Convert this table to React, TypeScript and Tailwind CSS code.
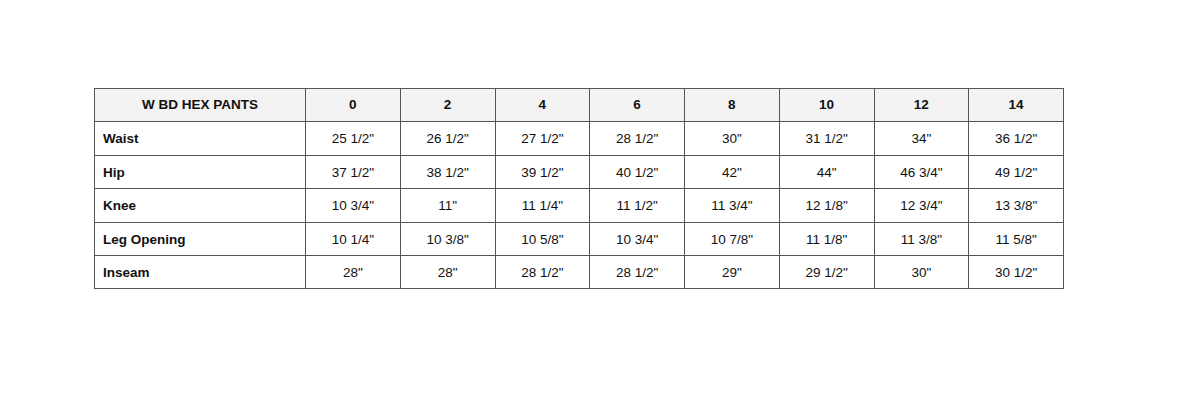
import React from "react";

const sizes = ["0", "2", "4", "6", "8", "10", "12", "14"];

const rows: { label: string; values: string[] }[] = [
  { label: "Waist", values: ['25 1/2"', '26 1/2"', '27 1/2"', '28 1/2"', '30"', '31 1/2"', '34"', '36 1/2"'] },
  { label: "Hip", values: ['37 1/2"', '38 1/2"', '39 1/2"', '40 1/2"', '42"', '44"', '46 3/4"', '49 1/2"'] },
  { label: "Knee", values: ['10 3/4"', '11"', '11 1/4"', '11 1/2"', '11 3/4"', '12 1/8"', '12 3/4"', '13 3/8"'] },
  { label: "Leg Opening", values: ['10 1/4"', '10 3/8"', '10 5/8"', '10 3/4"', '10 7/8"', '11 1/8"', '11 3/8"', '11 5/8"'] },
  { label: "Inseam", values: ['28"', '28"', '28 1/2"', '28 1/2"', '29"', '29 1/2"', '30"', '30 1/2"'] },
];

export default function App() {
  return (
    <div
      className="w-[1200px] h-[401px] bg-white pt-[88px] pl-[94px] text-[13.5px] text-[#111]"
      style={{ fontFamily: '"Liberation Sans", Arial, sans-serif' }}
    >
      <table className="border-collapse table-fixed w-[970px]">
        <colgroup>
          <col className="w-[211px]" />
          {sizes.map((s) => (
            <col key={s} />
          ))}
        </colgroup>
        <thead>
          <tr className="h-[33.4px] bg-[#f3f3f3]">
            <th className="border border-[#555] font-bold text-center">W BD HEX PANTS</th>
            {sizes.map((s) => (
              <th key={s} className="border border-[#555] font-bold text-center">
                {s}
              </th>
            ))}
          </tr>
        </thead>
        <tbody>
          {rows.map((r) => (
            <tr key={r.label} className="h-[33.4px]">
              <td className="border border-[#555] font-bold pl-[8px] pt-[2px]">{r.label}</td>
              {r.values.map((v, i) => (
                <td key={i} className="border border-[#555] text-center pt-[2px]">
                  {v}
                </td>
              ))}
            </tr>
          ))}
        </tbody>
      </table>
    </div>
  );
}
